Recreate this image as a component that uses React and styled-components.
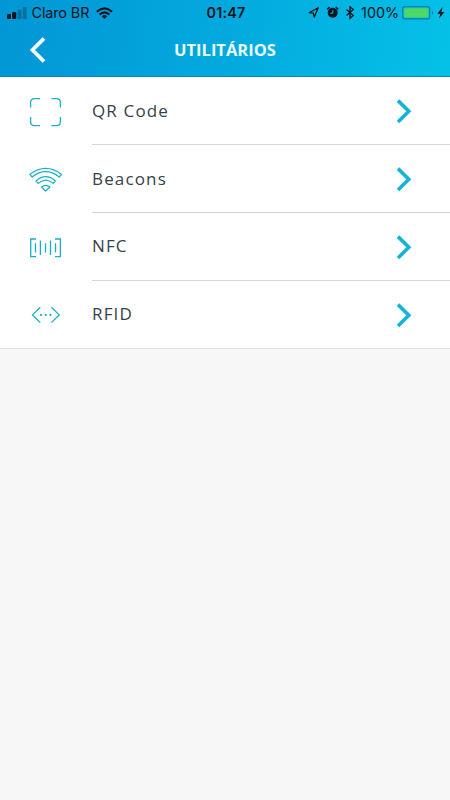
import React from 'react';
import styled, { createGlobalStyle } from 'styled-components';

const GlobalStyle = createGlobalStyle`
    * {
        box-sizing: border-box;
    }
    body {
        margin: 0;
        background: #f7f7f7;
    }
`;

const Screen = styled.div`
    min-height: 100vh;
    background: #f7f7f7;
    font-family: 'Open Sans', sans-serif;
`;

const Header = styled.header`
    height: 77px;
    background: linear-gradient(95deg, #0296d5 0%, #03a9de 50%, #05c1e7 100%);
    border-bottom: 1px solid #1286ae;
`;

const StatusBar = styled.div`
    display: grid;
    grid-template-columns: 1fr auto 1fr;
    align-items: center;
    height: 25px;
    padding: 0 5px 0 7px;
    color: #06141d;
    font-family: Inter, sans-serif;
    font-size: 14px;
    line-height: 25px;
`;

const StatusGroup = styled.div`
    display: flex;
    align-items: center;
    justify-content: ${(props) => (props.$end ? 'flex-end' : 'flex-start')};
    white-space: nowrap;

    svg {
        display: block;
        flex: none;
    }
`;

const Carrier = styled.span`
    margin: 0 7px 0 4.5px;
    font-size: 14.4px;
    letter-spacing: -0.1px;
`;

const Clock = styled.span`
    font-size: 14.3px;
    font-weight: 600;
    letter-spacing: 0.2px;
`;

const Percent = styled.span`
    margin: 0 3px 0 6px;
    font-size: 14.3px;
`;

const NavBar = styled.div`
    display: grid;
    grid-template-columns: 60px 1fr 60px;
    align-items: center;
    height: 49px;
`;

const BackButton = styled.button`
    display: flex;
    padding: 0 0 0 28px;
    border: 0;
    background: none;
`;

const Title = styled.h1`
    margin: 0;
    color: #e9fbff;
    font-size: 16.5px;
    font-weight: 700;
    line-height: 22px;
    text-align: center;
`;

const List = styled.ul`
    margin: 0;
    padding: 0;
    list-style: none;
    background: #fff;
    border-bottom: 1px solid #dedede;
`;

const Item = styled.li`
    display: flex;
    height: ${(props) => (props.$last ? '67px' : '68px')};
    padding-left: 28px;
`;

const ItemIcon = styled.svg`
    flex: none;
    width: 36px;
    height: 35px;
    margin: 16px 28px 0 0;
    fill: none;
    stroke: #1ab0c8;
    stroke-width: 1.3;
`;

const ItemBody = styled.div`
    display: flex;
    flex: 1;
    align-items: center;
    justify-content: space-between;
    height: 100%;
    padding-right: 38px;
    border-bottom: ${(props) => (props.$last ? '0' : '1px solid #d6d6d6')};
`;

const Label = styled.span`
    padding-bottom: ${(props) => (props.$raised ? '2px' : '0')};
    color: #36424a;
    font-size: 17px;
    font-weight: 400;
    line-height: 24px;
    letter-spacing: 1.15px;
`;

const Chevron = styled.svg`
    width: 18px;
    height: 26px;
    fill: none;
    stroke: #15b4d6;
    stroke-width: 3.6;
`;

const items = [
    {
        name: 'QR Code',
        icon: (
            <path d="M2.6 14.5V9.5Q2.6 5.6 6.5 5.6H12M23.5 5.6H28.5Q32.4 5.6 32.4 9.5V14.5M32.4 24V28.7Q32.4 32.6 28.5 32.6H23.5M12 32.6H6.5Q2.6 32.6 2.6 28.7V24" />
        ),
    },
    {
        name: 'Beacons',
        icon: (
            <g strokeWidth="1.2" strokeLinejoin="round">
                <path d="M1.8 13.4Q17.7 1.2 33.6 13.4L31.3 16Q17.7 5.4 4.1 16Z" />
                <path d="M8 20Q17.7 11.4 27.4 20L25.1 22.4Q17.7 15.7 10.3 22.4Z" />
                <path d="M13.5 26Q17.7 22.7 21.9 26L17.7 30Z" />
            </g>
        ),
    },
    {
        name: 'NFC',
        raised: true,
        icon: (
            <>
                <path d="M8 10H2.7V27.7H8M27 10H32.4V27.7H27" />
                <path d="M7.5 14.2V23.6M12.4 11.5V26M17.5 14.2V23.6M22.5 11.5V26M27.5 14.2V23.6" />
            </>
        ),
    },
    {
        name: 'RFID',
        raised: true,
        icon: (
            <>
                <path d="M12.3 10.2L4.5 17.9L12.3 25.6M23.4 10.2L31.2 17.9L23.4 25.6" />
                <g fill="#1ab0c8" stroke="none">
                    <circle cx="13" cy="17.9" r="1.1" />
                    <circle cx="17.7" cy="17.9" r="1.1" />
                    <circle cx="22.4" cy="17.9" r="1.1" />
                </g>
            </>
        ),
    },
];

function Signal() {
    return (
        <svg width="20" height="12" viewBox="0 0 20 12" fill="#06141d">
            <rect x="0" y="7" width="4" height="5" rx="1" />
            <rect x="5.2" y="5" width="4" height="7" rx="1" />
            <rect x="10.5" y="2.5" width="4" height="9.5" rx="1" opacity="0.3" />
            <rect x="15.7" y="0" width="4" height="12" rx="1" opacity="0.3" />
        </svg>
    );
}

function Wifi() {
    return (
        <svg width="17" height="12" viewBox="0 0 17 12" fill="none" stroke="#06141d" strokeWidth="2.2">
            <path d="M0.9 4.7Q8.5 -2.1 16.1 4.7" />
            <path d="M3.6 7.6Q8.5 3.2 13.4 7.6" />
            <path d="M5.8 9.2Q8.5 7 11.2 9.2L8.5 12Z" fill="#06141d" stroke="none" />
        </svg>
    );
}

function StatusIcons() {
    return (
        <svg width="47" height="14" viewBox="0 0 47 14">
            <path d="M1 6.7L10.2 1.7L6.2 11.2L5.4 7.1Z" fill="none" stroke="#06141d" strokeWidth="1.3" strokeLinejoin="round" />
            <circle cx="24.7" cy="6.8" r="5" fill="#06141d" />
            <path d="M19.2 3.4L21.7 1M27.7 1L30.2 3.4" stroke="#06141d" strokeWidth="1.5" />
            <path d="M24.9 3.8V7.2H22.2" fill="none" stroke="#08b5e2" strokeWidth="1" />
            <path d="M38.5 3.5L45.3 9.5L42 12.3V0.8L45.3 3.5L38.5 9.5" fill="none" stroke="#06141d" strokeWidth="1.3" />
        </svg>
    );
}

function Battery() {
    return (
        <svg width="43" height="14" viewBox="0 0 43 14">
            <rect x="0.7" y="0.7" width="27" height="12.2" rx="2.2" fill="none" stroke="#087fa0" strokeWidth="1.2" />
            <rect x="2.2" y="2.2" width="24" height="9.2" rx="0.8" fill="#4bd865" />
            <path d="M30 4.7Q32.4 6.8 30 8.9Z" fill="#087fa0" />
            <path d="M40.7 1L35.2 7.7H38.3L37 12.6L42.4 5.9H39.4Z" fill="#06141d" />
        </svg>
    );
}

export default function App() {
    return (
        <Screen>
            <GlobalStyle />
            <Header>
                <StatusBar>
                    <StatusGroup>
                        <Signal />
                        <Carrier>Claro BR</Carrier>
                        <Wifi />
                    </StatusGroup>
                    <Clock>01:47</Clock>
                    <StatusGroup $end>
                        <StatusIcons />
                        <Percent>100%</Percent>
                        <Battery />
                    </StatusGroup>
                </StatusBar>
                <NavBar>
                    <BackButton aria-label="Voltar">
                        <svg width="18" height="28" viewBox="0 0 18 28" fill="none" stroke="#fff" strokeWidth="3.8">
                            <path d="M16 2.5L4.5 14L16 25.5" />
                        </svg>
                    </BackButton>
                    <Title>UTILITÁRIOS</Title>
                </NavBar>
            </Header>
            <List>
                {items.map((item, index) => {
                    const last = index === items.length - 1;
                    return (
                        <Item key={item.name} $last={last}>
                            <ItemIcon viewBox="0 0 36 35">{item.icon}</ItemIcon>
                            <ItemBody $last={last}>
                                <Label $raised={item.raised}>{item.name}</Label>
                                <Chevron viewBox="0 0 18 26">
                                    <path d="M4 2.6L14.8 13.3L4 24" />
                                </Chevron>
                            </ItemBody>
                        </Item>
                    );
                })}
            </List>
        </Screen>
    );
}
